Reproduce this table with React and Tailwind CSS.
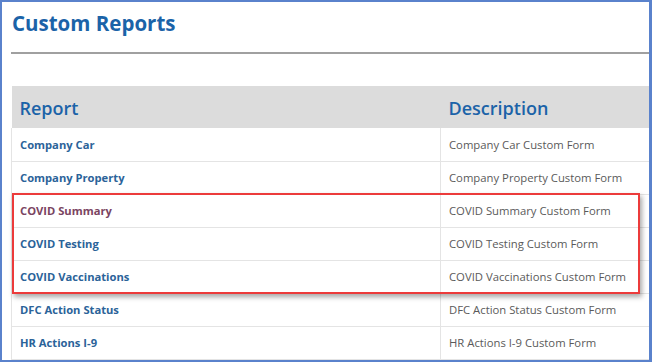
import React from "react";

const rows = [
  { name: "Company Car", desc: "Company Car Custom Form" },
  { name: "Company Property", desc: "Company Property Custom Form" },
  { name: "COVID Summary", desc: "COVID Summary Custom Form", visited: true },
  { name: "COVID Testing", desc: "COVID Testing Custom Form" },
  { name: "COVID Vaccinations", desc: "COVID Vaccinations Custom Form" },
  { name: "DFC Action Status", desc: "DFC Action Status Custom Form" },
  { name: "HR Actions I-9", desc: "HR Actions I-9 Custom Form" },
];

export default function App() {
  return (
    <div
      className="relative h-[362px] w-[652px] overflow-hidden border-t-2 border-r-[3px] border-b-2 border-l-2 border-[#5a82cc] bg-white"
      style={{ fontFamily: '"Open Sans", "Noto Sans", sans-serif' }}
    >
      <div className="pl-[9px]">
        <h1 className="pt-[7px] pl-[1px] text-[20.5px] leading-[28px] font-bold text-[#1b63a8]">
          Custom Reports
        </h1>
        <div className="mt-[15px] h-[2px] bg-[#a0a0a0]" />
        <table className="mt-[32px] w-full border-collapse text-left">
          <thead>
            <tr className="h-[42px] bg-[#dcdcdc]">
              <th className="w-[429px] pt-[3px] pl-[8px] text-[18px] font-semibold text-[#1b63a8]">Report</th>
              <th className="pt-[3px] pl-[8px] text-[18px] font-semibold text-[#1b63a8]">Description</th>
            </tr>
          </thead>
          <tbody>
            {rows.map((r) => (
              <tr key={r.name} className="h-[33px] border-b border-[#e4e4e4]">
                <td
                  className={
                    "border-l border-[#e4e4e4] pt-[2px] pl-[8px] text-[11.2px] font-bold " +
                    (r.visited ? "text-[#7a4461]" : "text-[#2b6399]")
                  }
                >
                  {r.name}
                </td>
                <td className="border-l border-[#e4e4e4] pt-[2px] pl-[8px] text-[11.3px] text-[#5a5a5a]">
                  {r.desc}
                </td>
              </tr>
            ))}
          </tbody>
        </table>
      </div>
      <div className="absolute top-[191px] left-[10px] h-[101px] w-[628px] border-2 border-[#ec3b3b] shadow-[2px_3px_5px_rgba(0,0,0,0.35)]" />
    </div>
  );
}
